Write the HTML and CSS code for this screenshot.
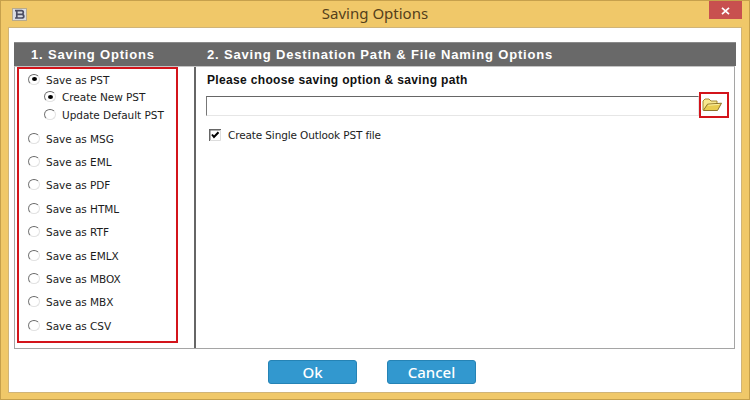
FILE: index.html
```html
<!DOCTYPE html>
<html lang="en">
<head>
  <meta charset="UTF-8" />
  <meta name="viewport" content="width=device-width, initial-scale=1.0" />
  <title>Saving Options</title>

  <link rel="stylesheet" href="styles.css">
</head>
<body>
<div class="window">
  <!-- Title bar -->
  <header class="titlebar">
    <svg class="app-icon" width="15" height="13" viewBox="0 0 15 13">
      <rect x="0.5" y="0.5" width="14" height="12" fill="#d9dce3" stroke="#b7aa8c" />
      <path d="M3 2.7H9.5Q11.3 2.7 11.3 4.4Q11.3 6.2 9.8 6.3Q11.8 6.5 11.8 8.2Q11.8 10 9.5 10H3M4.8 2.7V10M4.5 6.3H9.8" fill="none" stroke="#4b4d63" stroke-width="1.7" />
    </svg>
    <h1>Saving Options</h1>
    <button type="button" class="close" aria-label="Close">
      <svg width="9" height="8" viewBox="0 0 9 8">
        <path d="M1 0.8L8 7.2M8 0.8L1 7.2" stroke="#fff" stroke-width="1.7" />
      </svg>
    </button>
  </header>

  <main class="client">
    <div class="panels">
      <div class="panel-head">
        <h2 class="head-options">1. Saving Options</h2>
        <h2 class="head-path">2. Saving Destination Path &amp; File Naming Options</h2>
      </div>

      <div class="panel-body">
        <div class="options">
          <div class="formats">
            <label class="pst"><i class="radio checked"></i><span>Save as PST</span></label>
            <label class="sub"><i class="radio checked"></i><span>Create New PST</span></label>
            <label class="sub"><i class="radio"></i><span>Update Default PST</span></label>
            <div class="list">
              <label><i class="radio"></i><span>Save as MSG</span></label>
              <label><i class="radio"></i><span>Save as EML</span></label>
              <label><i class="radio"></i><span>Save as PDF</span></label>
              <label><i class="radio"></i><span>Save as HTML</span></label>
              <label><i class="radio"></i><span>Save as RTF</span></label>
              <label><i class="radio"></i><span>Save as EMLX</span></label>
              <label><i class="radio"></i><span>Save as MBOX</span></label>
              <label><i class="radio"></i><span>Save as MBX</span></label>
              <label><i class="radio"></i><span>Save as CSV</span></label>
            </div>
          </div>
        </div>

        <div class="destination">
          <h3>Please choose saving option &amp; saving path</h3>
          <div class="path-row">
            <input type="text" class="path" aria-label="Saving path" />
            <button type="button" class="browse" aria-label="Browse">
              <svg width="21" height="14" viewBox="0 0 21 14">
                <path d="M1 12V3L3 1H7L9 3H15V6" fill="#f7e78e" stroke="#a58a32" />
                <path d="M1.3 12.5L5.5 6.2L19.5 5.2L15.5 12.5Z" fill="#e8cc50" stroke="#8d742b" />
                <path d="M6.2 7.2L17.5 6.4" stroke="#fbf0a5" />
              </svg>
            </button>
          </div>
          <label class="single">
            <svg class="checkbox" width="12" height="12" viewBox="0 0 12 12">
              <path d="M0 0.75H12M0.75 0V12" stroke="#666" stroke-width="1.5" />
              <path d="M11.5 1V11.5H1" fill="none" stroke="#ddd" />
              <path d="M3 5.5L5 8L9.5 3.3" fill="none" stroke="#000" stroke-width="2" />
            </svg>
            <span>Create Single Outlook PST file</span>
          </label>
        </div>
      </div>
    </div>

    <div class="actions">
      <button type="button" class="btn">Ok</button>
      <button type="button" class="btn">Cancel</button>
    </div>
  </main>
</div>
</body>
</html>
```
FILE: styles.css
```css
* {
  box-sizing: border-box;
}

body {
  margin: 0;
  font-family: "DejaVu Sans", Verdana, sans-serif;
  font-size: 10.5px;
  color: #1c1c1c;
}

h1,
h2,
h3 {
  margin: 0;
}

button {
  padding: 0;
  border: none;
}

.window {
  display: flex;
  flex-direction: column;
  width: 750px;
  height: 400px;
  padding: 0 7px 6px;
  background-color: #f0c869;
  border: 1px solid #c6a04c;
}

.titlebar {
  display: grid;
  grid-template-columns: 33px 1fr 33px;
  height: 26px;
}

.app-icon {
  margin: 7px 0 0 4px;
}

.titlebar h1 {
  font: 400 15px/25px "Noto Sans", "Open Sans", sans-serif;
  text-align: center;
  color: #543f1b;
}

.close {
  display: flex;
  align-items: center;
  justify-content: center;
  height: 18px;
  padding-top: 1px;
  background-color: #c8504f;
}

.client {
  flex: 1;
  padding: 14px 5px 0;
  background-color: #fff;
  border: 1px solid #d0b478;
}

.panel-head {
  display: flex;
  height: 24px;
  background-color: #696969;
  border-top: 1px solid #8a8a8a;
}

.panel-head h2 {
  font: bold 13px/23px "Liberation Sans", Arial, sans-serif;
  letter-spacing: 0.83px;
  white-space: nowrap;
  color: #fff;
}

.head-options {
  width: 193px;
  padding-left: 17px;
}

.panel-body {
  display: flex;
  width: 721px;
  height: 283px;
  border: 1px solid #a5a5a5;
  border-top-color: #c4c4c4;
}

.options {
  width: 181px;
  padding: 0 0 0 2px;
  border-right: 2px solid #666;
}

.formats {
  width: 161px;
  height: 276px;
  padding: 2px 0 0 9px;
  border: 2px solid #d3141b;
}

.formats label {
  display: flex;
  align-items: center;
  height: 18px;
  letter-spacing: -0.04px;
  white-space: nowrap;
}

.formats .pst {
  height: 17px;
}

.formats .sub {
  padding-left: 16px;
}

.formats .list {
  padding-top: 3px;
}

.formats .list label {
  height: 23.4px;
}

.radio {
  display: flex;
  align-items: center;
  justify-content: center;
  width: 12px;
  height: 11px;
  margin: -1px 6px 0 0;
  border: 1px solid #e2e2e2;
  border-top-color: #666;
  border-left-color: #777;
  border-radius: 50%;
}

.radio.checked::after {
  content: "";
  width: 5px;
  height: 4px;
  background-color: #000;
  border-radius: 50%;
}

.destination {
  flex: 1;
  padding: 6px 5px 0 10px;
}

.destination h3 {
  padding-left: 1px;
  font: bold 12px/14px "Liberation Sans", Arial, sans-serif;
  letter-spacing: 0.34px;
  color: #111;
}

.path-row {
  display: flex;
  margin-top: 5px;
}

.path {
  width: 493px;
  height: 20px;
  margin-top: 4px;
  background-color: #fff;
  border: 1px solid #e6e6e6;
  border-top: 1px solid #666;
  border-left: 1px solid #777;
}

.browse {
  width: 30px;
  height: 26px;
  padding: 0 2px 0 0;
  background-color: #fff;
  border: 2px solid #d3141b;
}

.browse svg {
  display: block;
  margin-left: 1px;
}

.single {
  display: flex;
  align-items: center;
  gap: 7px;
  margin: 11px 0 0 3px;
  letter-spacing: -0.13px;
}

.actions {
  display: flex;
  justify-content: center;
  gap: 30px;
  padding: 11px 6px 0 0;
}

.btn {
  width: 89px;
  height: 24px;
  font: 500 15px/21px "Noto Sans", "Open Sans", sans-serif;
  color: #fff;
  background-color: #3298cf;
  border: 1px solid #2583b5;
  border-radius: 3px;
}
```
